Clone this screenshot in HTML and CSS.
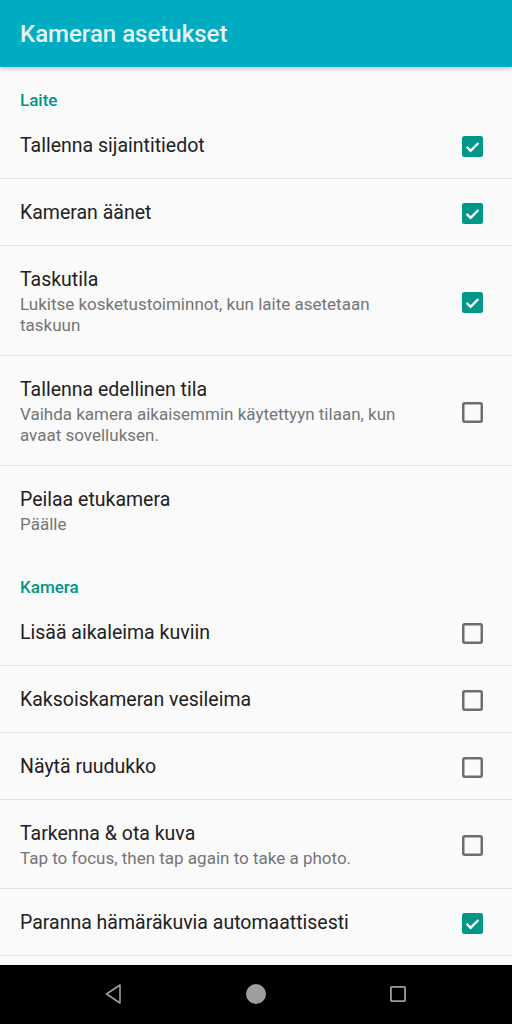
FILE: index.html
```html
<!DOCTYPE html>
<html lang="fi">
<head>
<meta charset="utf-8">
<title>Kameran asetukset</title>
<link rel="stylesheet" href="styles.css">
</head>
<body>
<div class="screen">
  <header class="appbar">
    <h1 class="appbar-title">Kameran asetukset</h1>
  </header>
  <main class="content">
    <div class="category">Laite</div>
    <div class="pref">
      <div class="pref-text"><div class="pref-title">Tallenna sijaintitiedot</div></div>
      <span class="cb cb-on"><svg viewBox="0 0 21 21" width="21" height="21"><rect x="0" y="0" width="21" height="21" rx="2.5" fill="#009688"/><path d="M4.6 10.8 L8.6 14.8 L16.4 7" fill="none" stroke="#fff" stroke-width="2.4"/></svg></span>
    </div>
    <div class="pref">
      <div class="pref-text"><div class="pref-title">Kameran äänet</div></div>
      <span class="cb cb-on"><svg viewBox="0 0 21 21" width="21" height="21"><rect x="0" y="0" width="21" height="21" rx="2.5" fill="#009688"/><path d="M4.6 10.8 L8.6 14.8 L16.4 7" fill="none" stroke="#fff" stroke-width="2.4"/></svg></span>
    </div>
    <div class="pref pref-two">
      <div class="pref-text"><div class="pref-title">Taskutila</div><div class="pref-summary">Lukitse kosketustoiminnot, kun laite asetetaan taskuun</div></div>
      <span class="cb cb-on"><svg viewBox="0 0 21 21" width="21" height="21"><rect x="0" y="0" width="21" height="21" rx="2.5" fill="#009688"/><path d="M4.6 10.8 L8.6 14.8 L16.4 7" fill="none" stroke="#fff" stroke-width="2.4"/></svg></span>
    </div>
    <div class="pref pref-two">
      <div class="pref-text"><div class="pref-title">Tallenna edellinen tila</div><div class="pref-summary">Vaihda kamera aikaisemmin käytettyyn tilaan, kun avaat sovelluksen.</div></div>
      <span class="cb"><svg viewBox="0 0 21 21" width="21" height="21"><rect x="1.25" y="1.25" width="18.5" height="18.5" rx="1.5" fill="none" stroke="#6e6e6e" stroke-width="2.5"/></svg></span>
    </div>
    <div class="pref pref-two pref-last">
      <div class="pref-text"><div class="pref-title">Peilaa etukamera</div><div class="pref-summary">Päälle</div></div>
    </div>

    <div class="category">Kamera</div>
    <div class="pref">
      <div class="pref-text"><div class="pref-title">Lisää aikaleima kuviin</div></div>
      <span class="cb"><svg viewBox="0 0 21 21" width="21" height="21"><rect x="1.25" y="1.25" width="18.5" height="18.5" rx="1.5" fill="none" stroke="#6e6e6e" stroke-width="2.5"/></svg></span>
    </div>
    <div class="pref">
      <div class="pref-text"><div class="pref-title">Kaksoiskameran vesileima</div></div>
      <span class="cb"><svg viewBox="0 0 21 21" width="21" height="21"><rect x="1.25" y="1.25" width="18.5" height="18.5" rx="1.5" fill="none" stroke="#6e6e6e" stroke-width="2.5"/></svg></span>
    </div>
    <div class="pref">
      <div class="pref-text"><div class="pref-title">Näytä ruudukko</div></div>
      <span class="cb"><svg viewBox="0 0 21 21" width="21" height="21"><rect x="1.25" y="1.25" width="18.5" height="18.5" rx="1.5" fill="none" stroke="#6e6e6e" stroke-width="2.5"/></svg></span>
    </div>
    <div class="pref pref-two">
      <div class="pref-text"><div class="pref-title">Tarkenna &amp; ota kuva</div><div class="pref-summary">Tap to focus, then tap again to take a photo.</div></div>
      <span class="cb"><svg viewBox="0 0 21 21" width="21" height="21"><rect x="1.25" y="1.25" width="18.5" height="18.5" rx="1.5" fill="none" stroke="#6e6e6e" stroke-width="2.5"/></svg></span>
    </div>
    <div class="pref">
      <div class="pref-text"><div class="pref-title">Paranna hämäräkuvia automaattisesti</div></div>
      <span class="cb cb-on"><svg viewBox="0 0 21 21" width="21" height="21"><rect x="0" y="0" width="21" height="21" rx="2.5" fill="#009688"/><path d="M4.6 10.8 L8.6 14.8 L16.4 7" fill="none" stroke="#fff" stroke-width="2.4"/></svg></span>
    </div>
  </main>
  <nav class="navbar">
    <svg class="nav-icon" viewBox="0 0 20 20" width="20" height="20"><path d="M16 1 L16 19 L2.5 10 Z" fill="none" stroke="#9e9e9e" stroke-width="1.6" stroke-linejoin="round"/></svg>
    <svg class="nav-icon" viewBox="0 0 20 20" width="20" height="20"><circle cx="10" cy="10" r="10" fill="#9e9e9e"/></svg>
    <svg class="nav-icon" viewBox="0 0 20 20" width="20" height="20"><rect x="2.9" y="2.9" width="14.2" height="14.2" rx="1" fill="none" stroke="#9e9e9e" stroke-width="1.8"/></svg>
  </nav>
</div>
</body>
</html>
```

FILE: styles.css
```css
* { box-sizing: border-box; }
html, body { margin: 0; padding: 0; }
body {
  background: #fafafa;
  font-family: Roboto, "Noto Sans", "Liberation Sans", sans-serif;
}
.screen {
  width: 512px;
  height: 1024px;
  display: flex;
  flex-direction: column;
  overflow: hidden;
}
.appbar {
  height: 67px;
  flex: none;
  background: #00acc1;
  display: flex;
  align-items: center;
  padding: 0 20px;
  box-shadow: 0 2px 4px rgba(0,0,0,0.22);
  position: relative;
  z-index: 1;
}
.appbar-title {
  margin: 0;
  font-size: 24px;
  font-weight: 500;
  color: #e4f6f9;
  padding-top: 1px;
}
.content {
  flex: 1;
  overflow: hidden;
  background: #fafafa;
}
.category {
  padding: 23px 20px 2px;
  line-height: 20px;
  font-size: 17px;
  font-weight: 500;
  color: #009688;
}
.pref {
  display: flex;
  align-items: center;
  padding: 22px 29px 20px 20px;
  border-bottom: 1px solid #e3e3e3;
}
.pref-two { padding-bottom: 19px; }
.pref-last { border-bottom: none; }
.pref-text {
  flex: 1;
  min-width: 0;
  padding-right: 34px;
}
.pref-title {
  font-size: 19.5px;
  line-height: 24px;
  color: #212121;
}
.pref-summary {
  margin-top: 2px;
  font-size: 17px;
  line-height: 21px;
  color: #757575;
}
.cb {
  flex: none;
  width: 21px;
  height: 21px;
  display: block;
}
.cb svg { display: block; }
.navbar {
  height: 59px;
  flex: none;
  background: #000;
  display: flex;
  align-items: center;
  justify-content: center;
  gap: 122px;
  padding-bottom: 2px;
}
.nav-icon { display: block; }
```
